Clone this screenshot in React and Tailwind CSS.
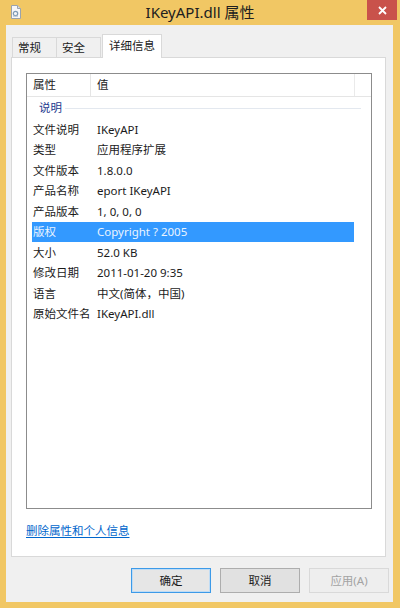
import React from 'react';

const rows = [
  ['文件说明', 'IKeyAPI'],
  ['类型', '应用程序扩展'],
  ['文件版本', '1.8.0.0'],
  ['产品名称', 'eport IKeyAPI'],
  ['产品版本', '1, 0, 0, 0'],
  ['版权', 'Copyright ? 2005', true],
  ['大小', '52.0 KB'],
  ['修改日期', '2011-01-20 9:35'],
  ['语言', '中文(简体，中国)'],
  ['原始文件名', 'IKeyAPI.dll'],
];

function FileIcon() {
  return (
    <svg width="12" height="14" viewBox="0 0 12 14">
      <path d="M1.5 0.5h6l3 3v10h-9z" fill="#f7f7f7" stroke="#9aa3ad" />
      <path d="M7.5 0.5v3h3" fill="#dde2e7" stroke="#9aa3ad" />
      <circle cx="5.5" cy="8.5" r="2.2" fill="none" stroke="#7f9bb5" strokeWidth="1.2" />
      <path d="M3 11h5" stroke="#9bb0c4" />
    </svg>
  );
}

export default function App() {
  return (
    <div
      className="w-[400px] h-[608px] bg-[#f1c764] flex flex-col text-[11.5px] text-[#1b1b1b] overflow-hidden"
      style={{ fontFamily: '"Noto Sans", "Noto Sans CJK SC", sans-serif' }}
    >
      {/* title bar */}
      <div className="h-[25px] shrink-0 grid grid-cols-[1fr_auto_1fr] items-start">
        <div className="pl-[10px] pt-[5px]">
          <FileIcon />
        </div>
        <div className="pt-[2px] text-[15px] leading-[20px] text-[#202020]">IKeyAPI.dll 属性</div>
        <div className="flex justify-end pr-[3px]">
          <div className="w-[30px] h-[20px] bg-[#c9524b] flex items-center justify-center">
            <svg width="9" height="9" viewBox="0 0 9 9">
              <path d="M1 1l7 7M8 1l-7 7" stroke="#fff" strokeWidth="1.8" />
            </svg>
          </div>
        </div>
      </div>

      {/* body */}
      <div className="flex-1 ml-[6px] mr-[7px] mb-[6px] bg-[#f0f0f0] flex flex-col px-[5px]">
        {/* tabs */}
        <div className="h-[32px] flex items-end pl-[1px] whitespace-nowrap">
          <div className="w-[45px] h-[20px] border border-b-0 border-[#d9d9d9] bg-[#f0f0f0] px-[5px] leading-[19px]">常规</div>
          <div className="w-[44px] h-[20px] border border-b-0 border-l-0 border-[#d9d9d9] bg-[#f0f0f0] px-[5px] leading-[19px]">安全</div>
          <div className="w-[60px] h-[24px] border border-b-0 border-[#d9d9d9] bg-white px-[6px] leading-[21px] -mb-[1px] relative z-10 ml-[1px]">详细信息</div>
        </div>

        {/* tab panel */}
        <div className="w-[375px] h-[500px] border border-[#d9d9d9] bg-white flex flex-col pt-[15px] pl-[14px] pr-[13px]">
          {/* list view */}
          <div className="h-[436px] border border-[#8c8c8c] flex flex-col">
            <div className="h-[23px] flex items-center border-b border-[#e5e5e5] shrink-0">
              <div className="w-[64px] h-full border-r border-[#e5e5e5] pl-[6px] leading-[22px]">属性</div>
              <div className="flex-1 h-full border-r border-[#eaeaea] pl-[6px] leading-[22px] mr-[16px]">值</div>
            </div>
            <div className="h-[22px] flex items-center pl-[12px] pr-[10px] gap-[3px]">
              <span className="text-[#1e3a8f]">说明</span>
              <div className="flex-1 h-px bg-[#e3e8ef]" />
            </div>
            {rows.map(([k, v, sel]) => (
              <div
                key={k}
                className={
                  'h-[20.5px] flex items-center ml-[5px] mr-[17px] whitespace-nowrap ' +
                  (sel ? 'bg-[#3399ff] text-[#eaf4ff]' : '')
                }
              >
                <div className="w-[65px] pl-[1px]">{k}</div>
                <div>{v}</div>
              </div>
            ))}
          </div>

          <div className="mt-[15px] h-[14px] flex items-center">
            <span className="text-[#0066cc] underline underline-offset-2">删除属性和个人信息</span>
          </div>
        </div>

        {/* buttons */}
        <div className="flex justify-end gap-[9px] mt-[11px] -mr-[1px]">
          <div className="w-[80px] h-[25px] border border-[#3c9ae8] bg-[#e6e6e6] flex items-center justify-center shadow-[inset_0_0_0_1px_#bfdcf5]">确定</div>
          <div className="w-[80px] h-[25px] border border-[#adadad] bg-[#e1e1e1] flex items-center justify-center">取消</div>
          <div className="w-[80px] h-[25px] border border-[#d9d9d9] bg-[#eeeeee] flex items-center justify-center text-[#a3a3a3]">应用(A)</div>
        </div>
      </div>
    </div>
  );
}
